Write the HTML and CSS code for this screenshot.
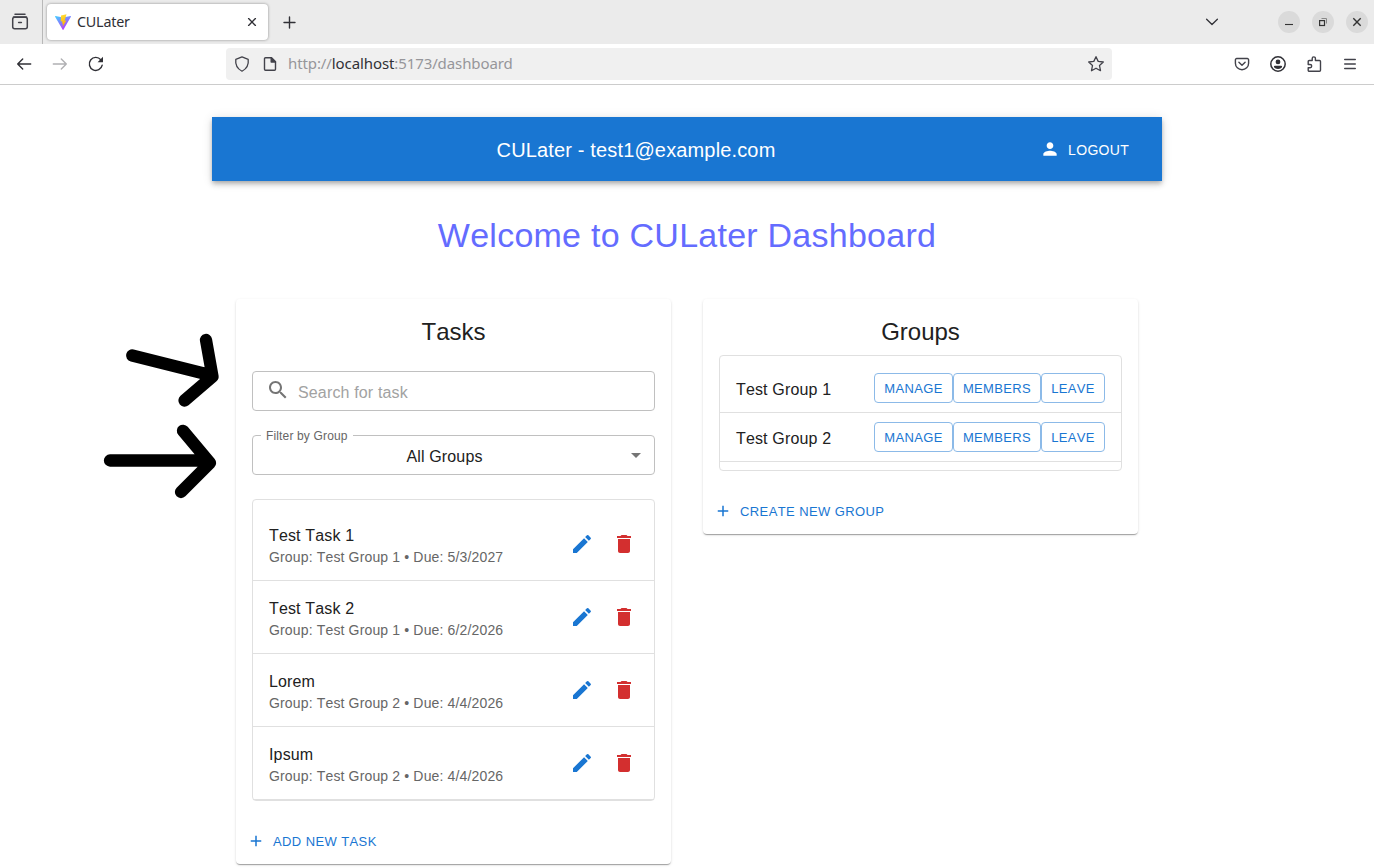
FILE: index.html
```html
<!DOCTYPE html>
<html lang="en">
<head>
<meta charset="utf-8">
<title>CULater</title>
<link rel="stylesheet" href="styles.css">
</head>
<body>
<svg class="defs" width="0" height="0">
  <symbol id="edit" viewBox="0 0 24 24"><path d="M3 17.25V21h3.75L17.81 9.94l-3.75-3.75zM20.71 7.04c.39-.39.39-1.02 0-1.41l-2.34-2.34a.9959.9959 0 0 0-1.41 0l-1.83 1.83 3.75 3.75z"/></symbol>
  <symbol id="trash" viewBox="0 0 24 24"><path d="M6 19c0 1.1.9 2 2 2h8c1.1 0 2-.9 2-2V7H6zM19 4h-3.5l-1-1h-5l-1 1H5v2h14z"/></symbol>
  <symbol id="plus" viewBox="0 0 24 24"><path d="M19 13h-6v6h-2v-6H5v-2h6V5h2v6h6z"/></symbol>
</svg>
<div class="tabstrip">
  <div class="recent"><svg width="18" height="18" viewBox="0 0 18 18" fill="none" stroke="#42424a" stroke-width="1.5" stroke-linecap="round"><path d="M4 1.3h10M2.5 4h13"/><rect x="1.7" y="4.2" width="14.6" height="11.6" rx="2"/><path d="M7.6 9.4h2.8"/></svg></div>
  <div class="tab">
    <svg width="16" height="16" viewBox="0 0 16 16">
      <defs>
        <linearGradient id="vg" x1="0" y1="0" x2=".6" y2="1"><stop offset="0" stop-color="#41d1ff"/><stop offset="1" stop-color="#bd34fe"/></linearGradient>
        <linearGradient id="vb" x1=".4" y1="0" x2=".6" y2="1"><stop offset="0" stop-color="#ffdd35"/><stop offset="1" stop-color="#ffa800"/></linearGradient>
      </defs>
      <path fill="url(#vg)" d="M15.9 2.7 8.4 15.7a.4.4 0 0 1-.7 0L.1 2.7a.4.4 0 0 1 .4-.6L8 3.4l7.5-1.3a.4.4 0 0 1 .4.6z"/>
      <path fill="url(#vb)" d="M11.5.3 6 1.4l-.3 6 1.7-.2-.4 2.4 1.1-.2-.7 3.6 4-6.5-1.8.3z"/>
    </svg>
    <span class="tab-title">CULater</span>
    <svg width="16" height="16" viewBox="0 0 16 16" stroke="#303036" stroke-width="1.35" stroke-linecap="round"><path d="m4.600 4.600 6.800 6.800m0-6.800-6.800 6.800"/></svg>
  </div>
  <svg class="newtab" width="16" height="16" viewBox="0 0 16 16" stroke="#303036" stroke-width="1.4" stroke-linecap="round"><path d="M7.500 3v11M2 8.500h11"/></svg>
  <svg class="alltabs" width="16" height="16" viewBox="0 0 16 16" fill="none" stroke="#303036" stroke-width="1.3" stroke-linecap="round" stroke-linejoin="round"><path d="m2.600 5.300 5.400 5.200 5.400-5.200"/></svg>
  <div class="wincontrols">
    <span class="wbtn"><svg width="12" height="12" viewBox="0 0 12 12" stroke="#333" stroke-width="1.1"><path d="M2 8.500h8"/></svg></span>
    <span class="wbtn"><svg width="12" height="12" viewBox="0 0 12 12" fill="none" stroke="#333"><rect x="2.600" y="4.600" width="4.900" height="4.900" stroke-width="1.200"/><path stroke="#888" d="M4.500 2.500h5v5"/></svg></span>
    <span class="wbtn"><svg width="12" height="12" viewBox="0 0 12 12" stroke="#333" stroke-width="1.4"><path d="m2.300 2.300 7.400 7.400m0-7.400L2.300 9.700"/></svg></span>
  </div>
</div>
<div class="navbar">
  <div class="navbtns">
    <svg width="16" height="16" viewBox="0 0 16 16" fill="none" stroke="#303036" stroke-width="1.4" stroke-linecap="round" stroke-linejoin="round"><path d="M14.700 8H1.700m5-5-5 5 5 5"/></svg>
    <svg width="16" height="16" viewBox="0 0 16 16" fill="none" stroke="#b0b0b3" stroke-width="1.4" stroke-linecap="round" stroke-linejoin="round"><path d="M1.300 8h13m-5-5 5 5-5 5"/></svg>
    <svg width="16" height="16" viewBox="0 0 16 16" fill="none" stroke="#303036" stroke-width="1.4" stroke-linecap="round"><path d="M14.200 9.200A6.500 6.500 0 1 1 12.800 3.700"/><path fill="#303036" stroke="none" d="M15 .8v5.500H9.600z"/></svg>
  </div>
  <div class="urlbar">
    <svg width="16" height="16" viewBox="0 0 16 16" fill="none" stroke="#42424a" stroke-width="1.3" stroke-linejoin="round"><path d="M8 .9 14.200 3.300c.7 5.500-1.700 9.500-6.200 11.900C3.500 12.800 1.100 8.800 1.800 3.300z"/></svg>
    <svg width="16" height="16" viewBox="0 0 16 16" fill="none" stroke="#42424a" stroke-width="1.4" stroke-linejoin="round"><path d="M9.500 1.700H3.500a1 1 0 0 0-1 1v10.600a1 1 0 0 0 1 1h9a1 1 0 0 0 1-1V5.700z"/><path fill="#42424a" d="M9.200 1.700v4.300h4.300z"/></svg>
    <span class="url">http://<b>localhost</b>:5173/dashboard</span>
    <svg class="star" width="18" height="18" viewBox="0 0 18 18" fill="none" stroke="#42424a" stroke-width="1.3" stroke-linejoin="round"><path d="m9 1.700 2.200 4.700 5.100.6-3.800 3.500 1 5.200L9 13.200l-4.500 2.500 1-5.200L1.700 7l5.100-.6z"/></svg>
  </div>
  <div class="tools">
    <svg width="16" height="16" viewBox="0 0 16 16" fill="none" stroke="#42424a" stroke-width="1.4" stroke-linecap="round" stroke-linejoin="round"><path d="M2.700 2.500h10.600a1.300 1.300 0 0 1 1.300 1.300v3.400a6.600 6.600 0 0 1-13.200 0V3.800a1.300 1.300 0 0 1 1.300-1.300z"/><path d="m4.900 6.300 3.100 3 3.100-3"/></svg>
    <svg width="16" height="16" viewBox="0 0 16 16"><circle cx="8" cy="8" r="7.200" fill="none" stroke="#303036" stroke-width="1.500"/><circle cx="8" cy="5.900" r="2.400" fill="#303036"/><path fill="#303036" d="M4.900 9.700h6.200a1 1 0 0 1 1 1c0 1.100-2 2.200-4.100 2.200s-4.100-1.100-4.100-2.200a1 1 0 0 1 1-1z"/></svg>
    <svg width="16" height="16" viewBox="0 0 16 16" fill="none" stroke="#42424a" stroke-width="1.400" stroke-linejoin="round"><path d="M6.200 4.500V2.500a1.600 1.600 0 0 1 3.200 0v2h4.100a1 1 0 0 1 1 1v8.800a1 1 0 0 1-1 1H3.200a1 1 0 0 1-1-1v-2.600h1.900a1.600 1.600 0 0 0 0-3.200H2.200v-3a1 1 0 0 1 1-1z"/></svg>
    <svg width="16" height="16" viewBox="0 0 16 16" stroke="#42424a" stroke-width="1.400" stroke-linecap="round"><path d="M2.700 3.500h10.600M2.700 8h10.600M2.700 12.500h10.600"/></svg>
  </div>
</div>
<main class="page">
  <header class="appbar">
    <div class="brand">CULater - test1@example.com</div>
    <button class="logout"><svg width="20" height="20" viewBox="0 0 24 24" fill="#fff"><path d="M12 12c2.210 0 4-1.790 4-4s-1.790-4-4-4-4 1.790-4 4 1.790 4 4 4m0 2c-2.670 0-8 1.340-8 4v2h16v-2c0-2.660-5.330-4-8-4"/></svg><span>LOGOUT</span></button>
  </header>
  <h1 class="welcome">Welcome to CULater Dashboard</h1>
  <div class="columns">
    <section class="card tasks">
      <h2>Tasks</h2>
      <div class="field search"><svg width="24" height="24" viewBox="0 0 24 24" fill="#757575"><path d="M15.500 14h-.79l-.28-.27C15.410 12.590 16 11.110 16 9.500 16 5.910 13.090 3 9.500 3S3 5.910 3 9.500 5.910 16 9.500 16c1.610 0 3.090-.59 4.230-1.570l.27.28v.79l5 4.990L20.490 19zm-6 0C7.010 14 5 11.990 5 9.500S7.010 5 9.500 5 14 7.010 14 9.500 11.990 14 9.500 14"/></svg><span>Search for task</span></div>
      <div class="field select"><span class="legend">Filter by Group</span><span class="value">All Groups</span><svg width="24" height="24" viewBox="0 0 24 24" fill="#757575"><path d="m7 10 5 5 5-5z"/></svg></div>
      <ul class="list">
        <li class="task"><div class="text"><p>Test Task 1</p><small>Group: Test Group 1 • Due: 5/3/2027</small></div><svg class="edit"><use href="#edit"/></svg><svg class="del"><use href="#trash"/></svg></li>
        <li class="task"><div class="text"><p>Test Task 2</p><small>Group: Test Group 1 • Due: 6/2/2026</small></div><svg class="edit"><use href="#edit"/></svg><svg class="del"><use href="#trash"/></svg></li>
        <li class="task"><div class="text"><p>Lorem</p><small>Group: Test Group 2 • Due: 4/4/2026</small></div><svg class="edit"><use href="#edit"/></svg><svg class="del"><use href="#trash"/></svg></li>
        <li class="task"><div class="text"><p>Ipsum</p><small>Group: Test Group 2 • Due: 4/4/2026</small></div><svg class="edit"><use href="#edit"/></svg><svg class="del"><use href="#trash"/></svg></li>
      </ul>
      <button class="add"><svg><use href="#plus"/></svg><span>ADD NEW TASK</span></button>
    </section>
    <section class="card groups">
      <h2>Groups</h2>
      <ul class="list">
        <li class="group"><p>Test Group 1</p><button class="manage">MANAGE</button><button class="members">MEMBERS</button><button class="leave">LEAVE</button></li>
        <li class="group"><p>Test Group 2</p><button class="manage">MANAGE</button><button class="members">MEMBERS</button><button class="leave">LEAVE</button></li>
      </ul>
      <button class="add"><svg><use href="#plus"/></svg><span>CREATE NEW GROUP</span></button>
    </section>
  </div>
</main>
<svg class="arrows" width="130" height="180" viewBox="95 325 130 180" fill="none" stroke="#000" stroke-width="12.300" stroke-linecap="round" stroke-linejoin="round"><path d="M132.200 355.500 208 374.500M206 340l6.500 36.500L184.500 400.500M110 460.500h96M183 430.800l27 32.200-29 29"/></svg>
</body>
</html>
```
FILE: styles.css
```css
* { box-sizing: border-box; }
body { margin: 0; height: 868px; overflow: hidden; background: #fff; color: #212121; font-family: "Liberation Sans", Arial, sans-serif; font-kerning: none; }
svg { display: block; flex: none; }
h1, h2, p, ul { margin: 0; padding: 0; font-weight: 400; }
button { font: inherit; font-kerning: none; color: inherit; background: none; border: 0; padding: 0; }
.defs { position: absolute; }

/* browser chrome */
.tabstrip { height: 44px; background: #ebebeb; display: flex; align-items: center; }
.recent { width: 43px; height: 44px; border-right: 1px solid #b8b8b8; display: flex; align-items: center; padding-left: 11px; }
.tab { width: 221px; height: 36px; margin-left: 4px; background: #fff; border-radius: 4px; box-shadow: 0 0 3px rgba(0,0,0,.4); display: flex; align-items: center; padding: 0 8px; }
.tab-title { flex: 1; margin-left: 6px; padding-bottom: 2px; font: 14.300px "Noto Sans", "Open Sans", sans-serif; color: #303036; letter-spacing: -.2px; }
.newtab { margin-left: 14px; }
.alltabs { margin-left: auto; }
.wincontrols { display: flex; gap: 12px; margin: 0 6px 0 58px; }
.wbtn { width: 22px; height: 22px; border-radius: 50%; background: #dadada; display: flex; align-items: center; justify-content: center; }
.navbar { height: 41px; border-bottom: 1px solid #ccc; display: flex; align-items: center; }
.navbtns { display: flex; gap: 20px; width: 226px; padding-left: 16px; }
.urlbar { width: 886px; height: 32px; background: #f0f0f0; border-radius: 4px; display: flex; align-items: center; gap: 12px; padding: 0 7px 0 8px; }
.url { margin-left: -2px; padding-bottom: 2px; font: 15px "Noto Sans", "Open Sans", sans-serif; letter-spacing: -.1px; color: #96969a; }
.url b { font-weight: 400; color: #303036; }
.star { margin-left: auto; }
.tools { display: flex; gap: 20px; margin-left: 122px; }

/* dashboard */
.page { width: 950px; margin: 32px auto 0; }
.appbar { height: 64px; background: #1976d2; color: #fff; display: flex; align-items: center; padding: 0 24px; box-shadow: 0 2px 4px -1px rgba(0,0,0,.2), 0 4px 5px rgba(0,0,0,.14), 0 1px 10px rgba(0,0,0,.12); }
.brand { flex: 1; padding-top: 2px; text-align: center; font-size: 20px; line-height: 32px; letter-spacing: .15px; }
.logout { width: 102px; display: flex; align-items: center; gap: 8px; padding: 0 4px; font-size: 14px; letter-spacing: .35px; }
.logout span { padding-top: 1px; }
.welcome { margin-top: 33px; text-align: center; font-size: 34px; line-height: 42px; letter-spacing: .25px; color: #646cff; }
.columns { display: flex; align-items: flex-start; gap: 32px; padding: 43px 24px 0; }
.card { width: 435px; padding: 16px 16px 8px; border-radius: 4px; box-shadow: 0 2px 1px -1px rgba(0,0,0,.2), 0 1px 1px rgba(0,0,0,.14), 0 1px 3px rgba(0,0,0,.12); }
.card h2 { height: 32px; padding-top: 1px; text-align: center; font-size: 24px; line-height: 32px; }
.field { height: 40px; margin-top: 24px; border: 1px solid #c0c0c0; border-radius: 4px; display: flex; align-items: center; }
.search { padding: 0 13px; gap: 8px; font-size: 16px; letter-spacing: .15px; color: #a2a2a2; }
.search svg { margin-top: -2px; }
.search span { padding-top: 4px; }
.select { position: relative; padding-right: 6px; letter-spacing: .15px; }
.value { flex: 1; text-align: center; padding: 4px 0 0 12px; }
.legend { position: absolute; left: 8px; top: -8px; padding: 0 5px; background: #fff; font-size: 12px; line-height: 16px; color: #666; }
.list { list-style: none; border: 1px solid #e0e0e0; border-radius: 4px; padding-top: 8px; }
.tasks .list { margin-top: 24px; }
.groups .list { margin-top: 8px; padding-bottom: 8px; }
.task, .group { display: flex; align-items: center; border-bottom: 1px solid #e0e0e0; padding: 0 16px; }
.task { height: 73px; padding-right: 18px; }
.list p { font-size: 16px; line-height: 24px; letter-spacing: .15px; }
.text { flex: 1; padding-top: 3px; }
.task small { display: block; margin-top: -1px; font-size: 14px; line-height: 20px; letter-spacing: .15px; color: #666; }
.edit, .del { width: 24px; height: 24px; fill: #1976d2; }
.del { fill: #d32f2f; margin-left: 18px; }
.group { height: 49px; }
.group p { flex: 1; padding-top: 3px; }
.group button { height: 30px; border: 1px solid #8cbae8; border-radius: 4px; color: #1976d2; font-size: 13px; letter-spacing: .35px; }
.manage { width: 79px; }
.members { width: 88px; }
.leave { width: 64px; }
.add { height: 31px; margin: 24px 0 0 -5px; display: flex; align-items: center; gap: 8px; color: #1976d2; font-size: 13px; letter-spacing: .4px; }
.add span { padding-top: 1px; }
.add svg { width: 18px; height: 18px; fill: #1976d2; }

/* hand-drawn pointers over the page */
.arrows { position: absolute; left: 95px; top: 325px; }
```
